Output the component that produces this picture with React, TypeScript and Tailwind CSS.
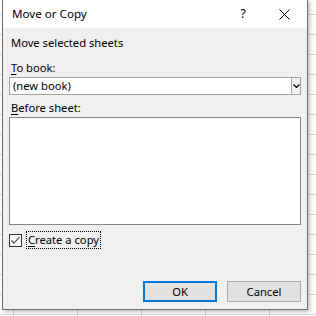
import React from "react";

function CloseIcon() {
  return (
    <svg width="11" height="11" viewBox="0 0 11 11" className="block">
      <path d="M0.5 0.5 L10.5 10.5 M10.5 0.5 L0.5 10.5" stroke="#000" strokeWidth="1" fill="none" />
    </svg>
  );
}

function Chevron() {
  return (
    <svg width="7" height="4" viewBox="0 0 7 4" className="block">
      <path d="M0.5 0.5 L3.5 3.5 L6.5 0.5" stroke="#000" strokeWidth="1.2" fill="none" />
    </svg>
  );
}

function Check() {
  return (
    <svg width="11" height="11" viewBox="0 0 11 11" className="block">
      <path d="M1.5 5.5 L4 8 L9.5 2" stroke="#333" strokeWidth="1.1" fill="none" />
    </svg>
  );
}

export default function App() {
  return (
    <div
      className="relative w-[316px] h-[316px] overflow-hidden bg-white bg-[linear-gradient(to_right,#dadada_1px,transparent_1px),linear-gradient(to_bottom,#dadada_1px,transparent_1px)] bg-[size:64px_20px] bg-[position:13px_14px] text-[11.2px] leading-[16px] text-black"
      style={{ fontFamily: '"Noto Sans", "Liberation Sans", sans-serif' }}
    >
      {/* dialog window */}
      <div className="absolute left-[2px] top-[-1px] w-[306px] h-[311px] bg-[#f0f0f0] border border-[#6f6f6f] shadow-[2px_2px_4px_rgba(0,0,0,0.25)] flex flex-col">
        {/* title bar */}
        <div className="h-[28px] bg-white flex items-center pl-[9px] text-[11.6px]">
          <span className="flex-1">Move or Copy</span>
          <span className="w-[20px] text-center mr-[26px] text-[12px]">?</span>
          <span className="mr-[17px]"><CloseIcon /></span>
        </div>

        <div className="flex flex-col px-[6px]">
          <div className="pl-[2px] mt-[7px] h-[16px]">Move selected sheets</div>

          <div className="pl-[2px] mt-[9px] h-[16px]"><u className="underline-offset-2">T</u>o book:</div>
          <div className="mt-[1px] h-[18px] bg-white border border-[#a3a3a3] flex items-stretch">
            <span className="flex-1 pl-[3px] leading-[16px]">(new book)</span>
            <span className="w-[9px] border-l border-[#a3a3a3] bg-[#f0f0f0] flex items-center justify-center"><Chevron /></span>
          </div>

          <div className="pl-[2px] mt-[5px] h-[16px]"><u className="underline-offset-2">B</u>efore sheet:</div>
          <div className="mt-[1px] h-[108px] bg-white border border-[#828790]" />

          <div className="mt-[7px] flex items-center h-[16px]">
            <span className="w-[13px] h-[13px] border border-[#333] bg-white flex items-center justify-center"><Check /></span>
            <span className="ml-[5px] px-[1px] outline-1 outline-dotted outline-black">
              <u className="underline-offset-2">C</u>reate a copy
            </span>
          </div>

          <div className="mt-[33px] flex justify-end gap-[10px]">
            <button className="w-[74px] h-[21px] bg-[#e1e1e1] border-2 border-[#0078d7] leading-[16px]">OK</button>
            <button className="w-[74px] h-[21px] bg-[#e1e1e1] border border-[#adadad] leading-[16px]">Cancel</button>
          </div>
        </div>
      </div>
    </div>
  );
}
